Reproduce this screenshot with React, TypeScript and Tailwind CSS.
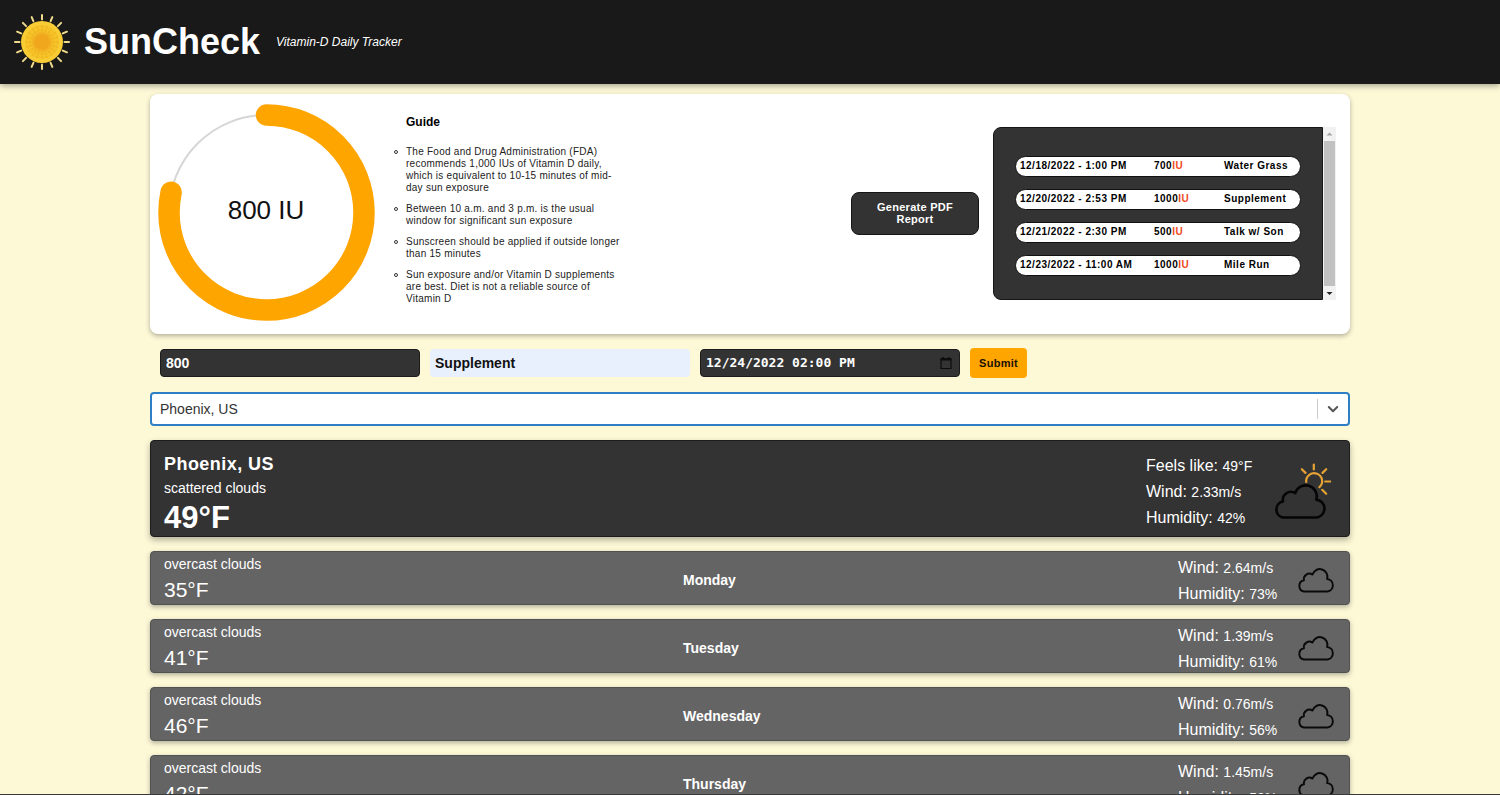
import React from "react";

const logs = [
  { date: "12/18/2022 - 1:00 PM", amount: 700, label: "Water Grass" },
  { date: "12/20/2022 - 2:53 PM", amount: 1000, label: "Supplement" },
  { date: "12/21/2022 - 2:30 PM", amount: 500, label: "Talk w/ Son" },
  { date: "12/23/2022 - 11:00 AM", amount: 1000, label: "Mile Run" },
];

const tips = [
  "The Food and Drug Administration (FDA) recommends 1,000 IUs of Vitamin D daily, which is equivalent to 10-15 minutes of mid-day sun exposure",
  "Between 10 a.m. and 3 p.m. is the usual window for significant sun exposure",
  "Sunscreen should be applied if outside longer than 15 minutes",
  "Sun exposure and/or Vitamin D supplements are best. Diet is not a reliable source of Vitamin D",
];

const forecast = [
  { day: "Monday", text: "overcast clouds", temp: "35°F", wind: "2.64m/s", humidity: "73%" },
  { day: "Tuesday", text: "overcast clouds", temp: "41°F", wind: "1.39m/s", humidity: "61%" },
  { day: "Wednesday", text: "overcast clouds", temp: "46°F", wind: "0.76m/s", humidity: "56%" },
  { day: "Thursday", text: "overcast clouds", temp: "42°F", wind: "1.45m/s", humidity: "52%" },
];

const CLOUD = "M10 56.5A8.2 8.2 0 0 1 10 40.4A8 8 0 0 1 22.2 32.2A11 11 0 0 1 43.3 38.6A9 9 0 0 1 43.5 56.5Z";

function SunLogo() {
  const rays = Array.from({ length: 16 }, (_, i) => i * 22.5);
  const beads = Array.from({ length: 20 }, (_, i) => i * 18);
  return (
    <svg viewBox="-28 -28 56 56" className="size-14 shrink-0" aria-hidden="true">
      {rays.map((a) => (
        <line key={a} x1="0" y1="-22.5" x2="0" y2="-27" stroke="#f0dc8c" strokeWidth="2" strokeLinecap="round" transform={`rotate(${a})`} />
      ))}
      <circle r="21" fill="#f8cc35" />
      <circle r="17" fill="#f6c32a" />
      {beads.map((a) => (
        <g key={a} transform={`rotate(${a})`}>
          <circle cy="-15.5" r="1.2" fill="#efb922" />
          <circle cy="-12" r="1.2" fill="#efb41f" />
        </g>
      ))}
      <circle r="10.5" fill="#f3b424" />
      <circle r="8" fill="#f0a71e" />
    </svg>
  );
}

function Dial() {
  return (
    <svg viewBox="0 0 217 217" className="size-[217px] shrink-0" role="img" aria-label="800 IU">
      <circle cx="108.5" cy="108.5" r="97.5" fill="none" stroke="#d6d6d6" strokeWidth="2" />
      <circle
        cx="108.5"
        cy="108.5"
        r="97.5"
        fill="none"
        stroke="#ffa500"
        strokeWidth="21.5"
        strokeLinecap="round"
        pathLength="360"
        strokeDasharray="282 360"
        transform="rotate(-90 108.5 108.5)"
      />
      <text x="108" y="115" textAnchor="middle" fontSize="26" fill="#111">
        800 IU
      </text>
    </svg>
  );
}

function Stat({ name, value }: { name: string; value: string }) {
  return (
    <p className="text-base leading-5 whitespace-nowrap">
      {name}: <span className="text-sm leading-5">{value}</span>
    </p>
  );
}

export default function App() {
  return (
    <div className="flex h-screen flex-col overflow-hidden border-b border-[#3a3a3a] bg-[#fdf9d7] font-['Liberation_Sans',Arial,sans-serif] text-black">
      <header className="relative flex h-[84px] shrink-0 items-center bg-[#191919] px-3.5 text-white shadow-[0_2px_6px_rgba(0,0,0,0.35)]">
        <SunLogo />
        <h1 className="ml-3.5 text-4xl font-bold">SunCheck</h1>
        <p className="ml-4 text-xs italic">Vitamin-D Daily Tracker</p>
      </header>

      <main className="mx-auto flex min-h-0 w-4/5 flex-1 flex-col gap-3.5 pt-2.5">
        <section className="flex h-60 shrink-0 items-center rounded-lg bg-white pr-3.5 pb-1 pl-2 shadow-[0_2px_5px_rgba(0,0,0,0.3)]">
          <Dial />
          <div className="ml-[31px] w-[214px] self-start pt-5">
            <h2 className="text-xs leading-4 font-bold">Guide</h2>
            <ul className="mt-4 flex flex-col gap-[9px] text-[10px] leading-3 tracking-wide text-[#222]">
              {tips.map((t) => (
                <li key={t} className="relative">
                  <span className="absolute top-1 -left-3 size-1 rounded-full border border-[#333]" />
                  {t}
                </li>
              ))}
            </ul>
          </div>
          <div className="ml-auto flex shrink-0 items-center gap-3.5 pt-0.5">
            <button className="h-[43px] w-32 rounded-lg border border-[#151515] bg-[#333] px-5 text-[11px] leading-3 font-bold tracking-wide text-white">
              Generate PDF Report
            </button>
            <div className="flex h-[173px]">
              <ul className="flex w-[330px] flex-col gap-3 rounded-l-lg border border-[#151515] bg-[#333] px-[21px] pt-7">
                {logs.map((l) => (
                  <li
                    key={l.date}
                    className="grid h-[21px] grid-cols-[134px_70px_1fr] items-center rounded-full border border-[#111] bg-white pl-1 text-[10px] leading-4 font-bold tracking-wider whitespace-nowrap"
                  >
                    <span>{l.date}</span>
                    <span>
                      {l.amount}
                      <span className="text-[#f04a1c]">IU</span>
                    </span>
                    <span>{l.label}</span>
                  </li>
                ))}
              </ul>
              <div className="flex w-[13px] flex-col items-center bg-[#f1f1f1]">
                <svg viewBox="0 0 13 14" className="h-3.5 w-[13px]" aria-hidden="true">
                  <path d="M3.5 8.5L6.5 5.5L9.5 8.5Z" fill="#a3a3a3" />
                </svg>
                <div className="w-[11px] flex-1 bg-[#c1c1c1]" />
                <svg viewBox="0 0 13 14" className="h-3.5 w-[13px]" aria-hidden="true">
                  <path d="M3.5 6L6.5 9L9.5 6Z" fill="#222" />
                </svg>
              </div>
            </div>
          </div>
        </section>

        <form className="flex h-[30px] shrink-0 items-center gap-2.5 px-2.5" onSubmit={(e) => e.preventDefault()}>
          <input
            aria-label="Amount"
            defaultValue="800"
            className="h-7 w-[260px] rounded border border-[#1c1c1c] bg-[#333] px-[5px] text-sm font-bold text-white"
          />
          <input
            aria-label="Activity"
            defaultValue="Supplement"
            className="h-7 w-[260px] rounded-sm bg-[#e8f0fe] px-[5px] text-sm font-bold text-[#111]"
          />
          <div className="flex h-7 w-[260px] items-center rounded border border-[#1c1c1c] bg-[#333] pr-1.5 pl-[5px]">
            <input
              aria-label="Date and time"
              defaultValue="12/24/2022 02:00 PM"
              className="min-w-0 flex-1 bg-transparent font-['DejaVu_Sans_Mono',monospace] text-[13px] font-bold text-white"
            />
            <svg viewBox="0 0 14 14" className="size-3.5" aria-hidden="true">
              <path d="M2 2.5H12V12.5H2Z" fill="none" stroke="#0c0c0c" strokeWidth="1.2" />
              <path d="M2 2H12V4.5H2ZM3.5 1H5V3H3.5ZM9 1H10.5V3H9Z" fill="#0c0c0c" />
            </svg>
          </div>
          <button className="h-[30px] w-[57px] rounded bg-[#ffa500] text-[11px] font-bold tracking-wide text-[#1a1000]">Submit</button>
        </form>

        <div className="grid h-[34px] shrink-0">
          <select
            aria-label="City"
            className="col-start-1 row-start-1 appearance-none rounded border-2 border-[#2f7fc6] bg-white px-2 text-sm text-[#333]"
          >
            <option>Phoenix, US</option>
          </select>
          <div className="pointer-events-none col-start-1 row-start-1 flex items-center gap-2 justify-self-end pr-2.5">
            <span className="h-5 w-px bg-[#ccc]" />
            <svg viewBox="0 0 14 14" className="size-3.5" fill="none" stroke="#555" strokeWidth="2" strokeLinecap="round" strokeLinejoin="round" aria-hidden="true">
              <path d="M2.8 5L7 9.2L11.2 5" />
            </svg>
          </div>
        </div>

        <section className="flex h-[97px] shrink-0 items-center justify-between rounded border border-[#1c1c1c] bg-[#333] px-[13px] text-white shadow-[0_3px_6px_rgba(0,0,0,0.3)]">
          <div className="self-end">
            <h2 className="text-lg leading-6 font-bold tracking-wide">Phoenix, US</h2>
            <p className="text-sm leading-6">scattered clouds</p>
            <p className="text-[31px] leading-9 font-bold">49°F</p>
          </div>
          <div className="flex items-center gap-4">
            <div className="flex w-[108px] flex-col gap-1.5 pt-1.5">
              <Stat name="Feels like" value="49°F" />
              <Stat name="Wind" value="2.33m/s" />
              <Stat name="Humidity" value="42%" />
            </div>
            <svg viewBox="-3 0 66 62" className="mt-1.5 h-[62px] w-[66px]" fill="none" strokeLinecap="round" strokeLinejoin="round" role="img" aria-label="scattered clouds">
              <path
                d="M33.2 21A8 8 0 1 1 46.4 26.2M40.8 3.5V8.5M28.8 8.2L32.5 11.9M53.2 8.2L49.5 11.9M52.2 20.5H57.2M49.2 28.8L53.2 32.8"
                stroke="#e6a233"
                strokeWidth="2.2"
              />
              <path d={CLOUD} stroke="#050505" strokeWidth="2.6" />
            </svg>
          </div>
        </section>

        {forecast.map((f) => (
          <section
            key={f.day}
            className="grid h-[54px] shrink-0 grid-cols-[519fr_495fr_158px] items-center rounded border border-[#525252] bg-[#646464] px-[13px] text-white shadow-[0_2px_5px_rgba(0,0,0,0.3)]"
          >
            <div className="pt-0.5">
              <p className="text-sm leading-5">{f.text}</p>
              <p className="mt-0.5 text-[21px] leading-7">{f.temp}</p>
            </div>
            <h3 className="pt-1 text-sm font-bold">{f.day}</h3>
            <div className="flex items-center justify-between">
              <div className="flex flex-col gap-1.5 pt-1.5">
                <Stat name="Wind" value={f.wind} />
                <Stat name="Humidity" value={f.humidity} />
              </div>
              <svg viewBox="0 20 56 40" className="mt-1 h-7 w-[39px]" fill="none" stroke="#0a0a0a" strokeWidth="2.8" strokeLinejoin="round" role="img" aria-label={f.text}>
                <path d={CLOUD} />
              </svg>
            </div>
          </section>
        ))}
      </main>
    </div>
  );
}
